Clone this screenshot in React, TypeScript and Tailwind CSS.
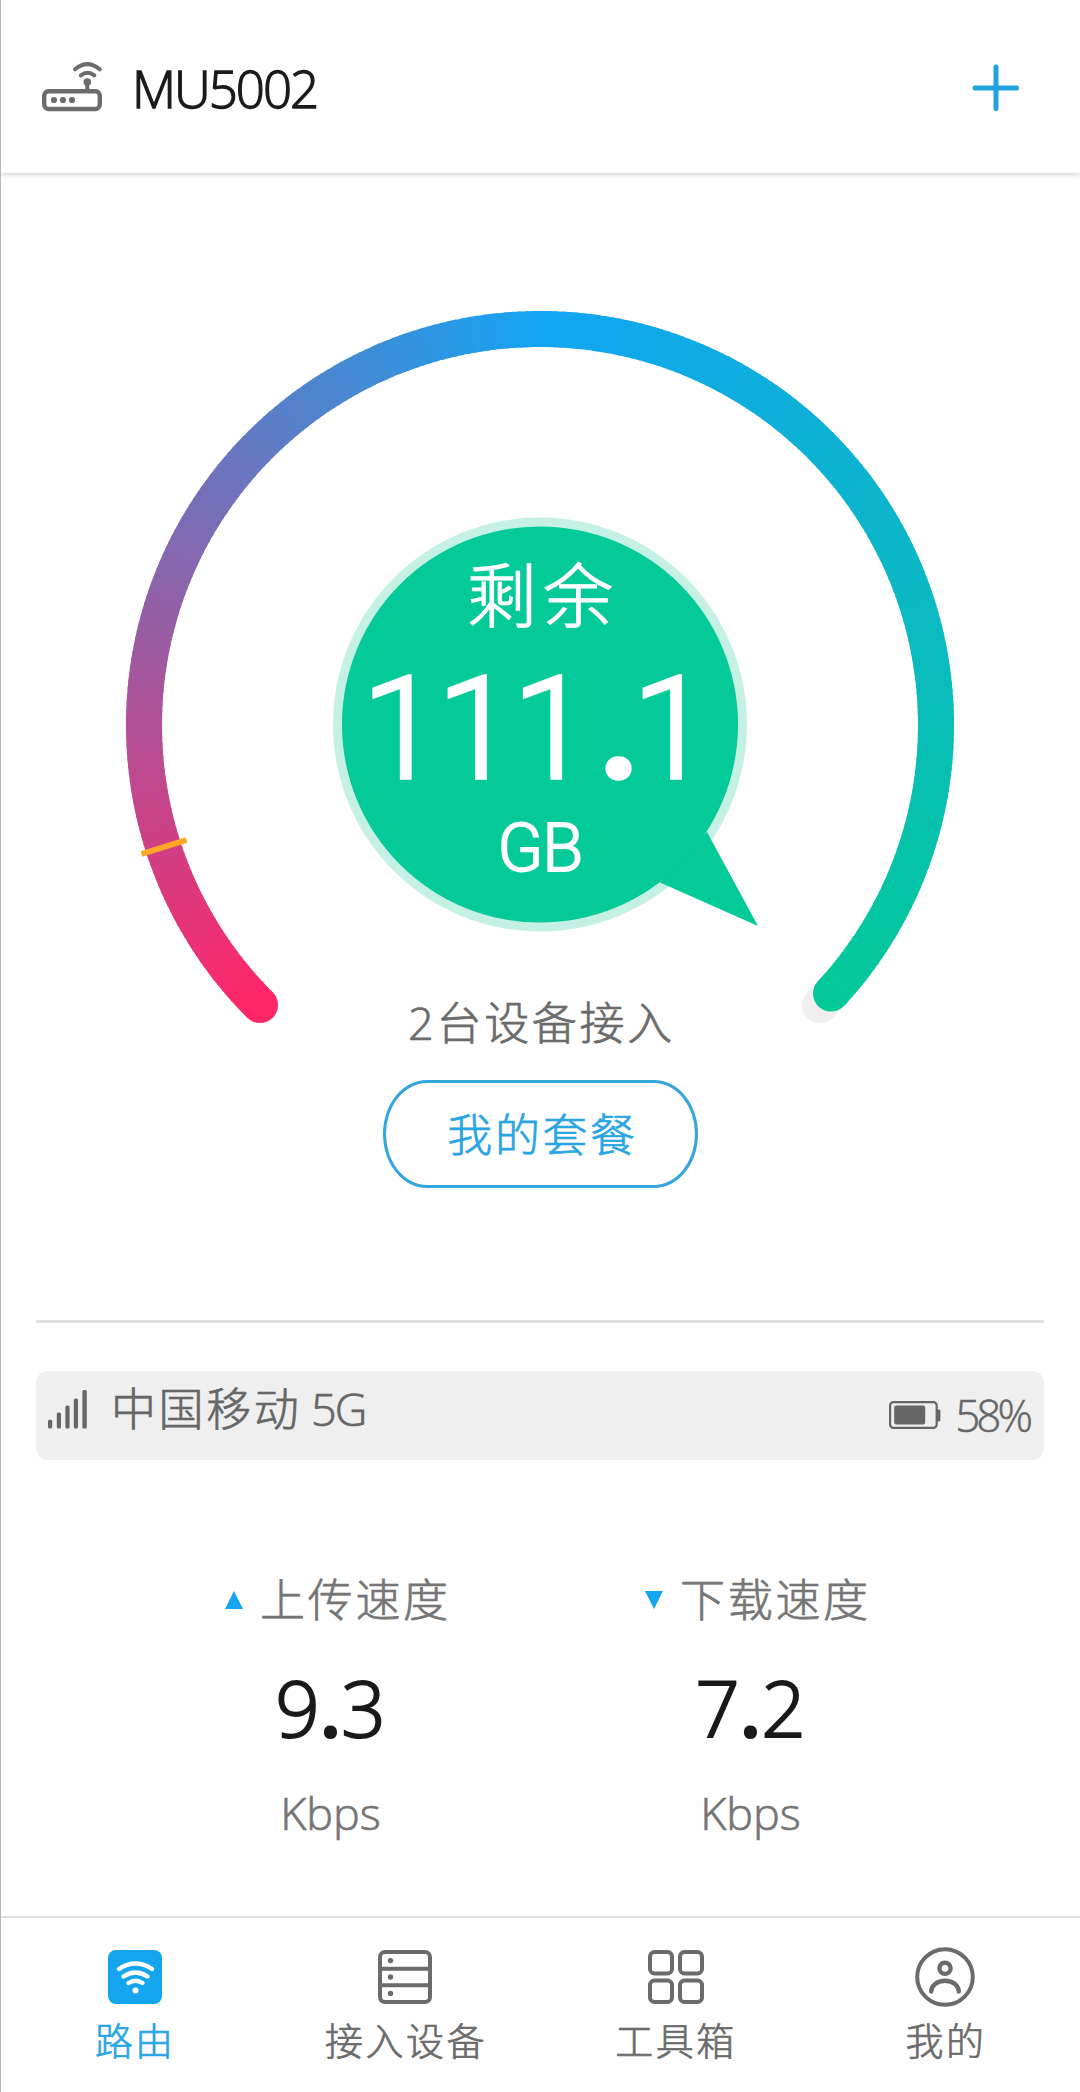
import type { ReactNode } from "react";

const CX = 540;
const CY = 725;
const RAIO = 396;
const INICIO = 135;
const FIM = 402.7;

const PINK = [255, 38, 104];
const BLUE = [18, 165, 242];
const GREEN = [3, 202, 152];

function ponto(graus: number, raio = RAIO) {
  const rad = (graus * Math.PI) / 180;
  return `${(CX + raio * Math.cos(rad)).toFixed(2)} ${(CY + raio * Math.sin(rad)).toFixed(2)}`;
}

function cor(graus: number) {
  const t = (graus - INICIO) / 135;
  const [a, b, k] = t < 1 ? [PINK, BLUE, t] as const : [BLUE, GREEN, Math.min(t - 1, 1)] as const;
  return `rgb(${a.map((v, i) => Math.round(v + (b[i] - v) * k)).join(",")})`;
}

// the sweep gradient is made of short slices, each with its own colour
const fatias: number[] = [];
for (let g = INICIO; g < FIM; g += 1) fatias.push(g);

function Gauge() {
  return (
    <svg className="block h-[687px] w-[828px] overflow-visible" viewBox="126 311 828 687" fill="none">
      <path d={`M${ponto(INICIO)} A${RAIO} ${RAIO} 0 1 1 ${ponto(405)}`} stroke="#efefef" strokeWidth="36" strokeLinecap="round" />
      <circle cx="260" cy="1005" r="18" fill={cor(INICIO)} />
      <circle cx="831" cy="993.5" r="18" fill={cor(FIM)} />
      {fatias.map((g) => (
        <path
          key={g}
          d={`M${ponto(g)} A${RAIO} ${RAIO} 0 0 1 ${ponto(Math.min(g + 1.3, FIM))}`}
          stroke={cor(g)}
          strokeWidth="36"
        />
      ))}
      <path d="M141.5 854 L186.5 840" stroke="#ffa726" strokeWidth="6" />
      <circle cx="540" cy="724.5" r="207" fill="#c4f1e4" />
      <path d="M707 832 L758 926 L660 882.5 Z" fill="#03ca98" />
      <circle cx="540" cy="724.5" r="198" fill="#03ca98" />
    </svg>
  );
}

function RouterIcon() {
  return (
    <svg className="h-[49px] w-[60px] overflow-visible" viewBox="0 0 60 49" fill="none" stroke="#6b6b6b" strokeLinecap="round">
      <rect x="2.2" y="29.2" width="55.6" height="17.8" rx="4.5" strokeWidth="4.4" />
      <path d="M33 7.3 Q45.3 -3 57.7 7.3 M38.8 13.3 Q45.5 8.2 52.3 13.3 M45.3 21 V28" strokeWidth="4" />
      <g fill="#6b6b6b" stroke="none">
        <circle cx="45.3" cy="20" r="3.8" />
        <circle cx="12" cy="38" r="3.1" />
        <circle cx="21" cy="38" r="3.1" />
        <circle cx="30" cy="38" r="3.1" />
      </g>
    </svg>
  );
}

function SignalIcon() {
  return (
    <svg className="h-[39px] w-[39px]" viewBox="0 0 39 39" fill="#666">
      <rect x="0" y="29.8" width="4.2" height="8.7" rx="1.5" />
      <rect x="8.8" y="22.6" width="4.2" height="15.9" rx="1.5" />
      <rect x="17.4" y="15.6" width="4.2" height="22.9" rx="1.5" />
      <rect x="25.8" y="8.6" width="4.2" height="29.9" rx="1.5" />
      <rect x="34.4" y="0" width="4.4" height="38.5" rx="1.5" />
    </svg>
  );
}

function BatteryIcon() {
  return (
    <svg className="h-7 w-[52px]" viewBox="0 0 52 28" fill="#666">
      <rect x="1.1" y="1.1" width="46.6" height="25.8" rx="3.5" fill="none" stroke="#666" strokeWidth="2.2" />
      <rect x="5.2" y="4.6" width="31" height="19" rx="2" />
      <path d="M48 8.4 h2 q1.4 0 1.4 1.4 v9.2 q0 1.4 -1.4 1.4 h-2 z" />
    </svg>
  );
}

function WifiTab() {
  return (
    <svg className="size-[54px]" viewBox="0 0 54 54" fill="none" stroke="#fff" strokeLinecap="round">
      <rect width="54" height="54" rx="8" fill="#14a5ee" stroke="none" />
      <path d="M11 19 Q27.5 8 44 19 M15.5 26.5 Q27.5 18.5 39.5 26.5 M20.5 33 Q27.5 28.5 34.5 33" strokeWidth="4.4" />
      <circle cx="27.5" cy="40.5" r="3" fill="#fff" stroke="none" />
    </svg>
  );
}

function DevicesTab() {
  return (
    <svg className="size-[54px]" viewBox="0 0 54 54" fill="none" stroke="#6b6b6b" strokeWidth="4">
      <rect x="2" y="2" width="50" height="50" rx="5" />
      <path d="M2 18.7 H52 M2 35.2 H52" />
      <g fill="#6b6b6b" stroke="none">
        <circle cx="12.5" cy="10.6" r="2.7" />
        <circle cx="12.5" cy="27" r="2.7" />
        <circle cx="12.5" cy="43.4" r="2.7" />
      </g>
    </svg>
  );
}

function ToolsTab() {
  return (
    <svg className="ml-[2px] h-[54px] w-14" viewBox="0 0 56 54" fill="none" stroke="#6b6b6b" strokeWidth="4">
      <rect x="2" y="2" width="22" height="21.4" rx="4.5" />
      <rect x="32" y="2" width="22" height="21.4" rx="4.5" />
      <rect x="2" y="30.6" width="22" height="21.4" rx="4.5" />
      <rect x="32" y="30.6" width="22" height="21.4" rx="4.5" />
    </svg>
  );
}

function PersonTab() {
  return (
    <svg className="-my-[3px] size-[60px]" viewBox="0 0 60 60" fill="none" stroke="#6b6b6b" strokeWidth="4">
      <circle cx="30" cy="30" r="27.8" />
      <circle cx="30" cy="21.3" r="5.6" strokeWidth="4.4" />
      <path d="M16.2 44.5 C16.2 38.5 22 33.8 30 33.8 S43.8 38.5 43.8 44.5" strokeWidth="4.4" strokeLinecap="round" />
    </svg>
  );
}

type SpeedProps = {
  icon: ReactNode;
  label: string;
  value: string;
};

function Speed({ icon, label, value }: SpeedProps) {
  const [inteiro, decimal] = value.split(".");
  return (
    <div className="flex w-[420px] flex-col items-center">
      <div className="flex h-12 items-center gap-[17px] self-start pl-[105px] text-[45px] leading-[50px] tracking-[2.7px] text-[#757575]">
        {icon}
        <span className="whitespace-nowrap">{label}</span>
      </div>
      <div className="mt-[53px] h-[60px] pl-[1px] text-[78px] leading-[60px] text-[#1a1a1a] [-webkit-text-stroke:2px]">
        {inteiro}<span className="font-semibold">.</span>{decimal}
      </div>
      <div className="mt-[52px] h-12 pl-[1px] text-[45px] leading-[48px] text-[#757575]">Kbps</div>
    </div>
  );
}

const abas = [
  { label: "路由", icon: <WifiTab />, ativa: true },
  { label: "接入设备", icon: <DevicesTab />, ativa: false },
  { label: "工具箱", icon: <ToolsTab />, ativa: false },
  { label: "我的", icon: <PersonTab />, ativa: false },
];

export default function App() {
  return (
    <div className="flex h-[2092px] w-[1080px] flex-col overflow-hidden border-l border-[#b8b8b8] bg-[#fefefe] font-['Open_Sans','Noto_Sans_CJK_SC',sans-serif] font-light [-webkit-text-stroke:0.7px]">
      <header className="flex h-[173px] shrink-0 items-center justify-between pr-[60px] pl-[41px] shadow-[0_1px_6px_rgba(0,0,0,0.22)]">
        <div className="flex items-center gap-[30px]">
          <RouterIcon />
          <h1 className="pt-[3px] text-[51px] leading-[60px] tracking-[-2px] text-[#1a1a1a] [-webkit-text-stroke:1.3px]">MU5002</h1>
        </div>
        <svg className="mt-[3px] size-12" viewBox="0 0 48 48" stroke="#22a3e0" strokeWidth="5" strokeLinecap="round">
          <path d="M24 3 V44.5 M3 24 H44.5" />
        </svg>
      </header>

      <main className="-ml-px flex w-[1080px] flex-1 flex-col items-center">
        <div className="relative mt-[138px]">
          <Gauge />
          <div className="absolute inset-x-0 top-[239px] flex flex-col items-center font-['Roboto','Noto_Sans_CJK_SC',sans-serif] text-white">
            <div className="pl-[6px] text-[70px] leading-[96px] tracking-[6px] [-webkit-text-stroke:1.2px]">剩余</div>
            <div className="-mt-[2px] pr-[11px] text-[142px] leading-[172px] tracking-[-3.5px] [-webkit-text-stroke:3.5px]">
              111<span className="mr-[-4px] ml-[11px] font-bold">.</span>1
            </div>
            <div className="-mt-[8px] text-[67px] leading-[80px] tracking-[-1px] [-webkit-text-stroke:1.8px]">GB</div>
          </div>
        </div>
        <div className="h-12 pl-[3px] text-[45px] leading-[50px] tracking-[2.7px] text-[#6b6b6b]">2台设备接入</div>
        <button className="mt-[34px] h-[108px] w-[315px] rounded-[44px/54px] border-[3px] border-[#35a5de] pt-[2px] pl-[5px] text-[45px] tracking-[2.6px] text-[#29a5e3]">
          我的套餐
        </button>

        <div className="mt-[132px] h-[3px] w-[1008px] bg-[#dfdfdf]" />
        <div className="mt-12 flex h-[89px] w-[1008px] items-center justify-between rounded-xl bg-[#efefef] pr-[15px] pl-3 text-[45px] leading-[48px] text-[#666]">
          <div className="-mt-[13px] flex items-center gap-[24px]">
            <SignalIcon />
            <span><span className="tracking-[2.6px]">中国移动</span><span className="tracking-[-2px]"> 5G</span></span>
          </div>
          <div className="-mt-[1px] flex items-center gap-[14px]">
            <BatteryIcon />
            <span className="text-[44px] tracking-[-4px] [-webkit-text-stroke:0.5px]">58%</span>
          </div>
        </div>

        <div className="mt-[116px] flex">
          <Speed
            icon={<svg className="h-[18px] w-[18px]" viewBox="0 0 18 18" fill="#14a5ee"><path d="M9 0 L18 18 H0 Z" /></svg>}
            label="上传速度"
            value="9.3"
          />
          <Speed
            icon={<svg className="h-[18px] w-[18px]" viewBox="0 0 18 18" fill="#14a5ee"><path d="M0 0 H18 L9 18 Z" /></svg>}
            label="下载速度"
            value="7.2"
          />
        </div>
      </main>

      <nav className="-ml-px grid h-[176px] w-[1080px] shrink-0 grid-cols-4 border-t-2 border-[#dedede] pt-8">
        {abas.map((aba) => (
          <div key={aba.label} className="flex flex-col items-center">
            {aba.icon}
            <span className={aba.ativa ? "mt-[15px] text-[38px] leading-[42px] tracking-[2px] text-[#29a5e3]" : "mt-[15px] pl-[2px] text-[38px] leading-[42px] tracking-[2.5px] text-[#6b6b6b]"}>
              {aba.label}
            </span>
          </div>
        ))}
      </nav>
    </div>
  );
}
